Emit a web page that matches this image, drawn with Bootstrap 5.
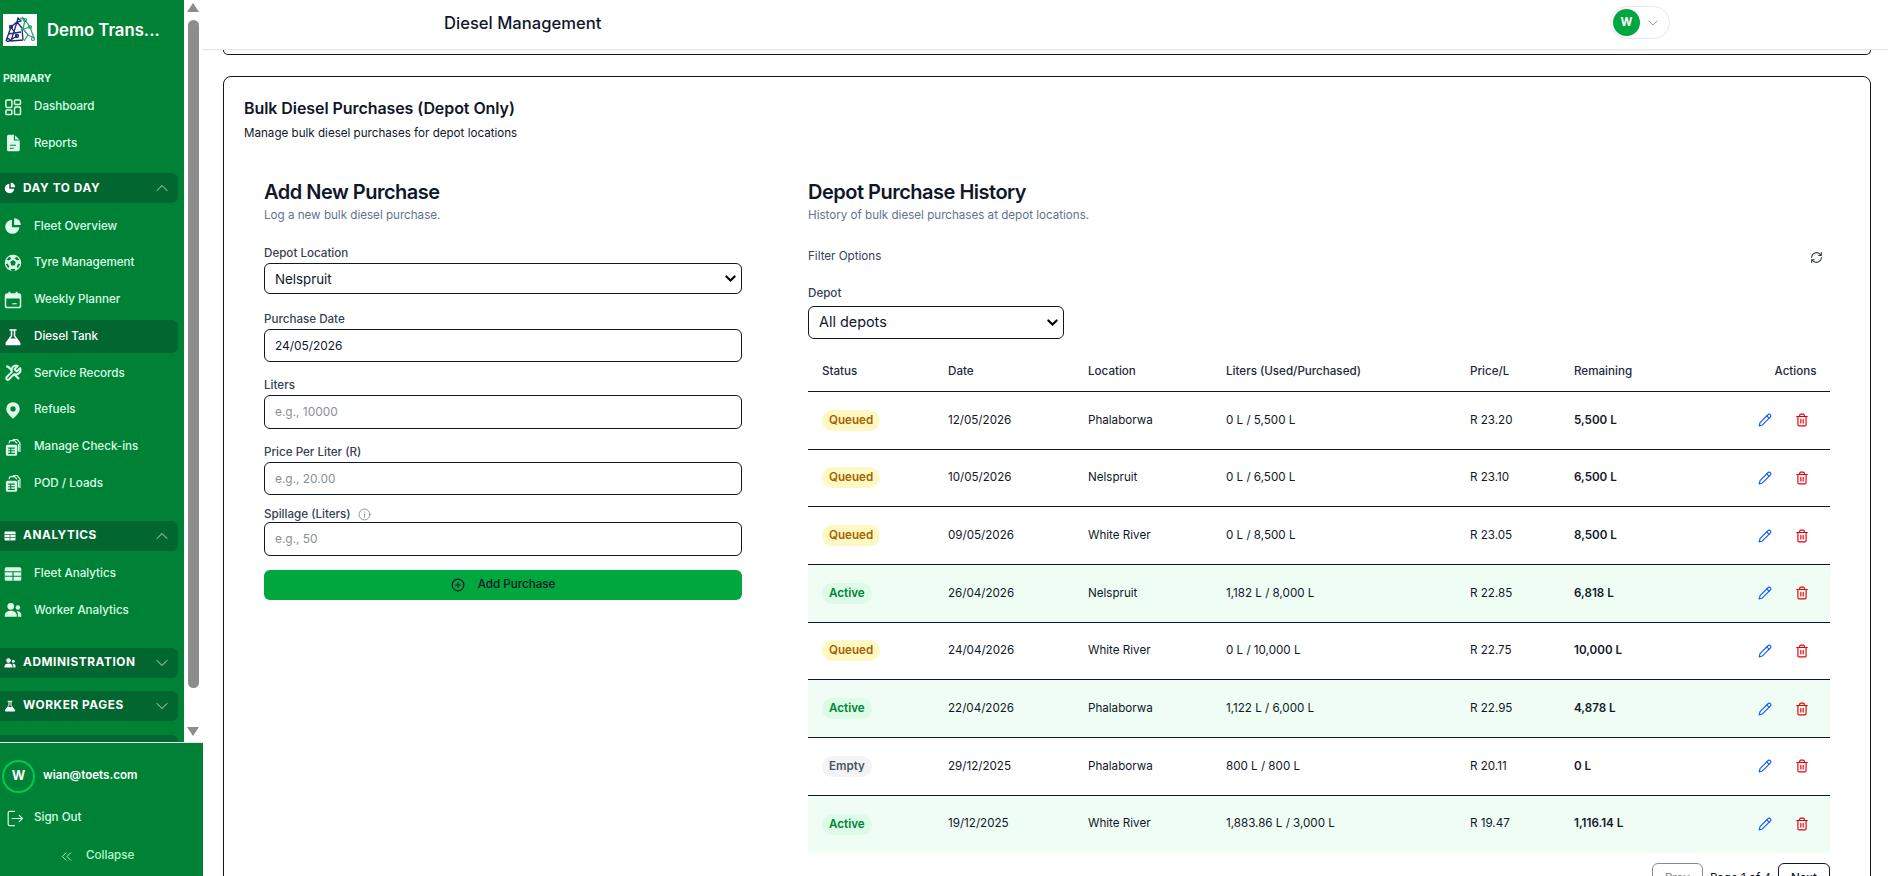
<!DOCTYPE html>
<html lang="en">
<head>
  <meta charset="UTF-8">
  <title>Diesel Management</title>
  <link href="https://cdn.jsdelivr.net/npm/bootstrap@5.3.0/dist/css/bootstrap.min.css" rel="stylesheet">
  <style>
    html, body { height: 100%; }
    body { font-family: Inter, "Liberation Sans", sans-serif; font-size: 11.62px; color: #0f172a; background: #fff; overflow: hidden; }
    svg { display: block; flex: none; }
    .ico-line { fill: none; stroke: currentColor; stroke-width: 2; stroke-linecap: round; stroke-linejoin: round; }

    /* sidebar */
    .side { width: 203px; height: 100vh; flex: none; background: #fff; }
    .side-scroll { height: 742px; overflow: hidden; }
    .side-nav { width: 184px; background: #008236; overflow: hidden; padding-right: 6px; }
    .side-brand { height: 71px; padding: 14px 0 0 3px; gap: 10px; color: #fff; font-size: 16.7px; font-weight: 600; line-height: 32px; }
    .side-logo { width: 34px; height: 32px; background: #fff; }
    .side-cap { height: 19.3px; padding-left: 3px; color: #dcfce7; font-size: 10.5px; font-weight: 700; line-height: 16px; }
    .side-item { height: 33px; margin-bottom: 3.7px; padding-left: 4px; gap: 12px; color: #dcfce7; font-weight: 500; border-radius: 0 6px 6px 0; text-decoration: none; }
    .side-item.is-on { background: #016630; color: #fff; }
    .side-list { padding: 6.5px 0 3.6px; }
    .side-group { height: 30px; margin-top: 13.5px; padding: 0 10px 0 4px; gap: 7px; background: #016630; color: #fff; font-size: 11.8px; font-weight: 700; letter-spacing: .05em; text-transform: uppercase; border-radius: 0 6px 6px 0; }
    .side-group .side-chev { margin-left: auto; color: #dcfce7; }
    .fake-bar { width: 19px; padding: 3px 0 6px; }
    .bar-up { width: 0; height: 0; border: 6.5px solid transparent; border-top: 0; border-bottom: 9px solid #8c8c8c; margin: 0 0 8px 3px; }
    .bar-thumb { width: 11px; height: 668px; margin-left: 4px; background: #8c8c8c; border-radius: 6px; }
    .bar-down { width: 0; height: 0; border: 6.5px solid transparent; border-bottom: 0; border-top: 9px solid #8c8c8c; margin: 39px 0 0 3px; }
    .side-foot { height: 134px; background: #008236; border-top: 1px solid #e5e7eb; padding-top: 16px; color: #dcfce7; font-weight: 500; }
    .foot-user { height: 34px; padding-left: 2px; gap: 8px; color: #fff; font-weight: 600; }
    .foot-ava { width: 33px; height: 33px; border: 2px solid #00c950; border-radius: 50%; font-size: 13px; font-weight: 700; }
    .foot-out { height: 34px; margin-top: 8px; padding-left: 5px; gap: 10px; }
    .foot-coll { height: 30px; margin-top: 6px; padding-left: 61px; gap: 14px; color: #b9f8cf; }

    /* top bar */
    .top-bar { height: 50px; flex: none; padding: 0 218px 4px 241px; border-bottom: 1px solid #e5e7eb; box-shadow: 0 1px 2px rgba(0,0,0,.04); position: relative; z-index: 2; background: #fff; }
    .top-title { font-size: 16.6px; font-weight: 500; color: #0f172a; margin-top: 1px; }
    .top-pill { width: 60px; height: 33px; padding-left: 2px; gap: 8px; border: 1px solid #e5e7eb; border-radius: 17px; }
    .top-ava { width: 27px; height: 27px; background: #00a63e; color: #fff; border-radius: 50%; font-size: 11.5px; font-weight: 700; }

    /* page */
    .page-area { min-width: 0; min-height: 0; padding: 0 17px 0 20px; overflow: hidden; }
    .prev-sheet { height: 5px; border: 1px solid #0f172a; border-top: 0; border-radius: 0 0 8px 8px; margin-bottom: 21px; }
    .sheet { border: 1px solid #0f172a; border-radius: 8px; padding: 19px 20px 30px 20px; }
    .sheet-title { font-size: 16px; font-weight: 600; line-height: 24px; letter-spacing: -.07px; margin: 0 0 4px; }
    .sheet-sub { line-height: 18px; margin: 0 0 16px; }
    .sheet-cols { gap: 32px; }
    .pane-add { width: 512px; flex: none; padding: 20px 14px 0 20px; }
    .pane-hist { flex: 1; min-width: 0; padding: 20px 20px 0; }
    .pane-title { font-size: 20px; font-weight: 600; line-height: 28px; letter-spacing: -.5px; margin: 0 0 1px; }
    .pane-sub { line-height: 16px; color: #62748e; margin: 0; }
    .fld-top { margin-top: 22px; }
    .fld { margin-bottom: 15px; }
    .fld label { display: flex; align-items: center; gap: 7px; color: #364153; font-weight: 500; line-height: 16px; margin-bottom: 2px; }
    .fld .form-control, .fld .form-select { height: 33.5px; border: 1px solid #0f172a; border-radius: 6px; color: #0f172a; font-size: 11.9px; padding: 0 10px; box-shadow: none; }
    .fld .form-control::placeholder { color: #8a8f98; }
    .fld .form-select { font-size: 13.3px; background-size: 11px; background-position: right 5px center; padding-right: 24px; background-image: url("data:image/svg+xml,%3csvg xmlns='http://www.w3.org/2000/svg' viewBox='0 0 16 16'%3e%3cpath fill='none' stroke='%23000' stroke-linecap='round' stroke-width='3' d='M2 5l6 6 6-6'/%3e%3c/svg%3e"); }
    .fld-first { margin-bottom: 16.5px; }
    .fld-first .form-select { height: 31px; padding-top: 2px; }
    .fld-tight { margin-bottom: 11px; }
    .fld-spill { margin-bottom: 14px; }
    .fld-spill label { margin-bottom: 0; }
    .btn-addp { height: 30px; background: #00a63e; border: 0; border-radius: 6px; color: #0f172a; font-size: 11.62px; font-weight: 500; gap: 13px; }
    .btn-addp:hover { background: #008236; color: #0f172a; }
    .filter-row { height: 16px; margin: 26px 0 20px; padding-right: 7px; color: #364153; }
    .fld-depot { width: 256px; margin-bottom: 13px; }
    .fld-depot label { margin-bottom: 5px; }
    .fld-depot .form-select { height: 32.5px; font-size: 14.4px; }

    .buy-table { width: 100%; table-layout: fixed; border-collapse: collapse; margin: 0; }
    .buy-table th { height: 40px; padding: 0 13.5px 0 13px; border-bottom: 1px solid #0f172a; font-size: 11.62px; font-weight: 500; color: #1e293b; }
    .buy-table td { height: 57.67px; padding: 0 13.5px 0 13px; border-bottom: 1px solid #0f172a; font-size: 11.62px; vertical-align: middle; }
    .buy-table tr:last-child td { border-bottom: 0; }
    .buy-table tr.is-live td { background: #f0fdf4; }
    .c-status { width: 127px; } .c-date { width: 140px; } .c-loc { width: 138px; } .c-lit { width: 244px; } .c-price { width: 104px; }
    .c-first { padding-left: 14px !important; }
    .c-left { font-weight: 600; }
    .pill-st { display: inline-block; padding: 0 7px; height: 21px; line-height: 21px; border-radius: 11px; font-size: 11.62px; font-weight: 600; }
    .pill-q { background: #fef9c2; color: #a65f00; }
    .pill-a { background: #dcfce7; color: #008236; }
    .pill-e { background: #f3f4f6; color: #4a5565; }
    .row-acts { gap: 23px; padding-right: 8px; }
    .ic-edit { color: #155dfc; }
    .ic-del { color: #e7000b; }
    .pager { margin-top: 10px; gap: 7px; }
    .pager .btn { height: 32px; padding: 0 12px; font-size: 11.62px; font-weight: 500; border: 1px solid #0f172a; border-radius: 6px; color: #0f172a; background: #fff; }
    .pager .btn:disabled { opacity: .5; }
  </style>
</head>
<body>
  <svg width="0" height="0" class="position-absolute">
    <symbol id="i-grid" viewBox="0 0 24 24"><g class="ico-line"><rect x="2.5" y="2.5" width="8" height="10" rx="1.5"/><rect x="14" y="2.5" width="8" height="6" rx="1.5"/><rect x="14" y="12" width="8" height="10" rx="1.5"/><rect x="2.5" y="16" width="8" height="6" rx="1.5"/></g></symbol>
    <symbol id="i-file" viewBox="0 0 24 24"><path fill="currentColor" d="M6 1h8l7 7v13a2 2 0 0 1-2 2H6a2 2 0 0 1-2-2V3a2 2 0 0 1 2-2z"/><path fill="none" stroke="#008236" stroke-width="1.6" d="M14 1v7h7M8 15h8M8 19h5"/></symbol>
    <symbol id="i-pie" viewBox="0 0 24 24"><path fill="currentColor" d="M10.5 3.5a9.5 9.5 0 1 0 10 10h-10z"/><path fill="currentColor" d="M13.5 1.5a9 9 0 0 1 9 9h-9z"/></symbol>
    <symbol id="i-ball" viewBox="0 0 24 24"><circle cx="12" cy="12" r="11" fill="currentColor"/><g fill="#008236"><path d="M12 8l3.800 2.800-1.500 4.400H9.700L8.200 10.800z"/><path d="M7 3.500 10 5.500 6.500 8.500 3.500 7.500zM17 3.500 14 5.500 17.500 8.500 20.500 7.500zM2.500 13.500 5 12.500 7 17 5.500 19zM21.500 13.500 19 12.500 17 17 18.500 19zM9 20l6 0-1 2.500h-4z"/></g></symbol>
    <symbol id="i-cal" viewBox="0 0 24 24"><rect x="2" y="4" width="20" height="18" rx="2.5" fill="none" stroke="currentColor" stroke-width="2"/><path fill="currentColor" d="M2 6.500A2.500 2.500 0 0 1 4.500 4H19.500A2.500 2.500 0 0 1 22 6.500V10H2zM6 1h2.500v4H6zM15.500 1H18v4h-2.500z"/><path stroke="currentColor" stroke-width="1.500" d="M11 17h6"/></symbol>
    <symbol id="i-flask" viewBox="0 0 24 24"><path fill="none" stroke="currentColor" stroke-width="2" stroke-linecap="round" d="M8 2.500h8M10 3v7.500L3 20M14 3v7.500L21 20"/><path fill="currentColor" d="M7.500 14h9l5.300 6.500c.8 1.300 0 2.500-1.500 2.500H3.700c-1.500 0-2.300-1.200-1.500-2.500z"/></symbol>
    <symbol id="i-tools" viewBox="0 0 24 24"><path fill="none" stroke="currentColor" stroke-width="2.600" stroke-linejoin="round" d="M14.700 6.300a1 1 0 0 0 0 1.400l1.600 1.600a1 1 0 0 0 1.400 0l3.770-3.770a6 6 0 0 1-7.940 7.940l-6.910 6.910a2.120 2.120 0 0 1-3-3l6.910-6.910a6 6 0 0 1 7.940-7.940z"/><path fill="none" stroke="currentColor" stroke-width="3" d="M3 3l3 1 5 5M14 14l6 6"/></symbol>
    <symbol id="i-pin" viewBox="0 0 24 24"><path fill="currentColor" fill-rule="evenodd" d="M12 1.500a9 9 0 0 0-9 9c0 6 9 13 9 13s9-7 9-13a9 9 0 0 0-9-9zm0 5.500a3.500 3.500 0 1 1 0 7 3.500 3.500 0 0 1 0-7z"/></symbol>
    <symbol id="i-stack" viewBox="0 0 24 24"><path fill="currentColor" d="M4.500 9h11a2 2 0 0 1 2 2v10.500a2 2 0 0 1-2 2h-11a2 2 0 0 1-2-2V11a2 2 0 0 1 2-2z"/><path stroke="#008236" stroke-width="1.500" d="M5.500 13.500h9M5.500 17h9M5.500 20.500h9M9 13v8"/><path fill="none" stroke="currentColor" stroke-width="1.600" d="M7 7V5.500a2 2 0 0 1 2-2h5l3.500 3.500M12.500 2.500V2h5l3 3.500a2 2 0 0 1 .8 1.500v11.500M19.200 8v10"/></symbol>
    <symbol id="i-table" viewBox="0 0 24 24"><rect x="1" y="3" width="22" height="18" rx="2" fill="currentColor"/><path stroke="#008236" stroke-width="1.500" d="M1 9h22M1 15h22M12 9v12"/></symbol>
    <symbol id="i-users" viewBox="0 0 24 24"><circle cx="9" cy="7" r="4.500" fill="currentColor"/><circle cx="18.500" cy="8.500" r="3" fill="currentColor"/><path fill="currentColor" d="M1 21v-2c0-3.500 3.500-6 8-6s8 2.500 8 6v2zM18.500 21v-3c0-1.500-.6-3-1.700-4.200 3.600-.6 6.200 1.400 6.200 4.200v3z"/></symbol>
    <symbol id="i-up" viewBox="0 0 24 24"><path fill="none" stroke="currentColor" stroke-width="1.700" stroke-linecap="round" d="M2 17 12 7l10 10"/></symbol>
    <symbol id="i-down" viewBox="0 0 24 24"><path fill="none" stroke="currentColor" stroke-width="1.700" stroke-linecap="round" d="M2 7l10 10L22 7"/></symbol>
    <symbol id="i-pen" viewBox="0 0 24 24"><g class="ico-line"><path d="M17 3a2.850 2.830 0 1 1 4 4L7.500 20.500 2 22l1.500-5.500Z"/><path d="m15 5 4 4"/></g></symbol>
    <symbol id="i-bin" viewBox="0 0 24 24"><g class="ico-line"><path d="M3 6h18M19 6v14c0 1-1 2-2 2H7c-1 0-2-1-2-2V6M8 6V4c0-1 1-2 2-2h4c1 0 2 1 2 2v2M10 11v6M14 11v6"/></g></symbol>
  </svg>

  <div class="d-flex vh-100">
    <aside class="side d-flex flex-column">
      <div class="side-scroll d-flex">
        <nav class="side-nav">
          <div class="side-brand d-flex align-items-start">
            <svg class="side-logo" viewBox="0 0 34 32">
              <g fill="none" stroke="#1e2a78" stroke-width="1.300"><path d="M3 27 8 13l6-5 5 6 1 12M8 13l6 9-8 5M14 8l-6 19 12-1M14 8l1-4 3 3-4 1M5 20l13-2"/><circle cx="8" cy="13" r="1.500"/><circle cx="14" cy="22" r="1.500"/><circle cx="5" cy="26" r="1.500"/></g>
              <g fill="none" stroke="#22a06b" stroke-width="1.200"><path d="M17 4l5 2 5 7 4 11-6-3-4 6M22 6l-2 9 5 6M27 13l-9 3M19 3l3 3"/><circle cx="22" cy="6" r="1.500"/><circle cx="27" cy="13" r="1.500"/><circle cx="30" cy="25" r="1.500"/></g>
            </svg>
            <span>Demo Trans...</span>
          </div>
          <div class="side-cap">PRIMARY</div>
          <a href="#" class="side-item d-flex align-items-center"><svg width="18" height="18"><use href="#i-grid"/></svg>Dashboard</a>
          <a href="#" class="side-item d-flex align-items-center"><svg width="18" height="18"><use href="#i-file"/></svg>Reports</a>

          <div class="side-group d-flex align-items-center"><svg width="12" height="12"><use href="#i-pie"/></svg>Day to Day<svg class="side-chev" width="12" height="12"><use href="#i-up"/></svg></div>
          <div class="side-list">
            <a href="#" class="side-item d-flex align-items-center"><svg width="18" height="18"><use href="#i-pie"/></svg>Fleet Overview</a>
            <a href="#" class="side-item d-flex align-items-center"><svg width="18" height="18"><use href="#i-ball"/></svg>Tyre Management</a>
            <a href="#" class="side-item d-flex align-items-center"><svg width="18" height="18"><use href="#i-cal"/></svg>Weekly Planner</a>
            <a href="#" class="side-item is-on d-flex align-items-center"><svg width="18" height="18"><use href="#i-flask"/></svg>Diesel Tank</a>
            <a href="#" class="side-item d-flex align-items-center"><svg width="18" height="18"><use href="#i-tools"/></svg>Service Records</a>
            <a href="#" class="side-item d-flex align-items-center"><svg width="18" height="18"><use href="#i-pin"/></svg>Refuels</a>
            <a href="#" class="side-item d-flex align-items-center"><svg width="18" height="18"><use href="#i-stack"/></svg>Manage Check-ins</a>
            <a href="#" class="side-item d-flex align-items-center"><svg width="18" height="18"><use href="#i-stack"/></svg>POD / Loads</a>
          </div>

          <div class="side-group d-flex align-items-center"><svg width="12" height="12"><use href="#i-table"/></svg>Analytics<svg class="side-chev" width="12" height="12"><use href="#i-up"/></svg></div>
          <div class="side-list">
            <a href="#" class="side-item d-flex align-items-center"><svg width="18" height="18"><use href="#i-table"/></svg>Fleet Analytics</a>
            <a href="#" class="side-item d-flex align-items-center"><svg width="18" height="18"><use href="#i-users"/></svg>Worker Analytics</a>
          </div>

          <div class="side-group d-flex align-items-center"><svg width="12" height="12"><use href="#i-users"/></svg>Administration<svg class="side-chev" width="12" height="12"><use href="#i-down"/></svg></div>
          <div class="side-group d-flex align-items-center"><svg width="12" height="12"><use href="#i-flask"/></svg>Worker Pages<svg class="side-chev" width="12" height="12"><use href="#i-down"/></svg></div>
          <div class="side-group d-flex align-items-center"><svg width="12" height="12"><use href="#i-users"/></svg>Account<svg class="side-chev" width="12" height="12"><use href="#i-down"/></svg></div>
        </nav>
        <div class="fake-bar">
          <div class="bar-up"></div>
          <div class="bar-thumb"></div>
          <div class="bar-down"></div>
        </div>
      </div>
      <div class="side-foot">
        <div class="foot-user d-flex align-items-center">
          <span class="foot-ava d-flex align-items-center justify-content-center">W</span>
          <span>wian@toets.com</span>
        </div>
        <div class="foot-out d-flex align-items-center">
          <svg width="19" height="19" viewBox="0 0 24 24" class="ico-line"><path stroke-width="1.500" d="M12 3H6a2 2 0 0 0-2 2v14a2 2 0 0 0 2 2h6M9 12h13M18 8l4 4-4 4"/></svg>
          <span>Sign Out</span>
        </div>
        <div class="foot-coll d-flex align-items-center">
          <svg width="11" height="11" viewBox="0 0 24 24" class="ico-line"><path d="M11 4l-8 8 8 8M21 4l-8 8 8 8"/></svg>
          <span>Collapse</span>
        </div>
      </div>
    </aside>

    <div class="flex-grow-1 d-flex flex-column" id="main-col">
      <header class="top-bar d-flex align-items-center justify-content-between">
        <div class="top-title">Diesel Management</div>
        <div class="top-pill d-flex align-items-center">
          <span class="top-ava d-flex align-items-center justify-content-center">W</span>
          <svg width="10" height="10" class="text-secondary"><use href="#i-down"/></svg>
        </div>
      </header>

      <main class="page-area flex-grow-1">
        <div class="prev-sheet"></div>
        <section class="sheet">
          <h2 class="sheet-title">Bulk Diesel Purchases (Depot Only)</h2>
          <p class="sheet-sub">Manage bulk diesel purchases for depot locations</p>

          <div class="sheet-cols d-flex">
            <div class="pane-add">
              <h3 class="pane-title">Add New Purchase</h3>
              <p class="pane-sub">Log a new bulk diesel purchase.</p>
              <form>
                <div class="fld fld-first fld-top">
                  <label>Depot Location</label>
                  <select class="form-select"><option>Nelspruit</option><option>Phalaborwa</option><option>White River</option></select>
                </div>
                <div class="fld">
                  <label>Purchase Date</label>
                  <input class="form-control" type="text" value="24/05/2026">
                </div>
                <div class="fld">
                  <label>Liters</label>
                  <input class="form-control" type="text" placeholder="e.g., 10000">
                </div>
                <div class="fld fld-tight">
                  <label>Price Per Liter (R)</label>
                  <input class="form-control" type="text" placeholder="e.g., 20.00">
                </div>
                <div class="fld fld-spill">
                  <label>Spillage (Liters)
                    <svg width="13" height="13" viewBox="0 0 24 24" class="ico-line text-secondary"><circle cx="12" cy="12" r="10" stroke-width="1.400"/><path stroke-width="1.400" d="M12 11v6M12 7.500v.1"/></svg>
                  </label>
                  <input class="form-control" type="text" placeholder="e.g., 50">
                </div>
                <button type="button" class="btn btn-addp w-100 d-flex align-items-center justify-content-center p-0">
                  <svg width="14" height="14" viewBox="0 0 24 24" class="ico-line"><circle cx="12" cy="12" r="10"/><path d="M12 8v8M8 12h8"/></svg>
                  Add Purchase
                </button>
              </form>
            </div>

            <div class="pane-hist">
              <h3 class="pane-title">Depot Purchase History</h3>
              <p class="pane-sub">History of bulk diesel purchases at depot locations.</p>
              <div class="filter-row d-flex align-items-center justify-content-between">
                <span>Filter Options</span>
                <svg width="13" height="13" viewBox="0 0 24 24" class="ico-line"><path d="M3 12a9 9 0 0 1 9-9 9.750 9.750 0 0 1 6.740 2.740L21 8M21 3v5h-5M21 12a9 9 0 0 1-9 9 9.750 9.750 0 0 1-6.740-2.740L3 16M8 16H3v5"/></svg>
              </div>
              <div class="fld fld-depot">
                <label>Depot</label>
                <select class="form-select"><option>All depots</option><option>Nelspruit</option><option>Phalaborwa</option><option>White River</option></select>
              </div>

              <table class="buy-table">
                <thead>
                  <tr>
                    <th class="c-status c-first">Status</th>
                    <th class="c-date">Date</th>
                    <th class="c-loc">Location</th>
                    <th class="c-lit">Liters (Used/Purchased)</th>
                    <th class="c-price">Price/L</th>
                    <th>Remaining</th>
                    <th class="text-end">Actions</th>
                  </tr>
                </thead>
                <tbody id="buy-rows"></tbody>
              </table>

              <div class="pager d-flex align-items-center justify-content-end">
                <button class="btn" disabled>Prev</button>
                <span>Page 1 of 4</span>
                <button class="btn">Next</button>
              </div>
            </div>
          </div>
        </section>
      </main>
    </div>
  </div>

  <script>
    const purchases = [
      ['Queued', '12/05/2026', 'Phalaborwa', '0 L / 5,500 L', 'R 23.20', '5,500 L'],
      ['Queued', '10/05/2026', 'Nelspruit', '0 L / 6,500 L', 'R 23.10', '6,500 L'],
      ['Queued', '09/05/2026', 'White River', '0 L / 8,500 L', 'R 23.05', '8,500 L'],
      ['Active', '26/04/2026', 'Nelspruit', '1,182 L / 8,000 L', 'R 22.85', '6,818 L'],
      ['Queued', '24/04/2026', 'White River', '0 L / 10,000 L', 'R 22.75', '10,000 L'],
      ['Active', '22/04/2026', 'Phalaborwa', '1,122 L / 6,000 L', 'R 22.95', '4,878 L'],
      ['Empty', '29/12/2025', 'Phalaborwa', '800 L / 800 L', 'R 20.11', '0 L'],
      ['Active', '19/12/2025', 'White River', '1,883.86 L / 3,000 L', 'R 19.47', '1,116.14 L']
    ];
    const pillClass = { Queued: 'pill-q', Active: 'pill-a', Empty: 'pill-e' };

    document.getElementById('buy-rows').innerHTML = purchases.map(p => `
      <tr class="${p[0] === 'Active' ? 'is-live' : ''}">
        <td class="c-first"><span class="pill-st ${pillClass[p[0]]}">${p[0]}</span></td>
        <td>${p[1]}</td>
        <td>${p[2]}</td>
        <td>${p[3]}</td>
        <td>${p[4]}</td>
        <td class="c-left">${p[5]}</td>
        <td>
          <div class="row-acts d-flex align-items-center justify-content-end">
            <svg class="ic-edit" width="14" height="14"><use href="#i-pen"/></svg>
            <svg class="ic-del" width="14" height="14"><use href="#i-bin"/></svg>
          </div>
        </td>
      </tr>`).join('');
  </script>
</body>
</html>
